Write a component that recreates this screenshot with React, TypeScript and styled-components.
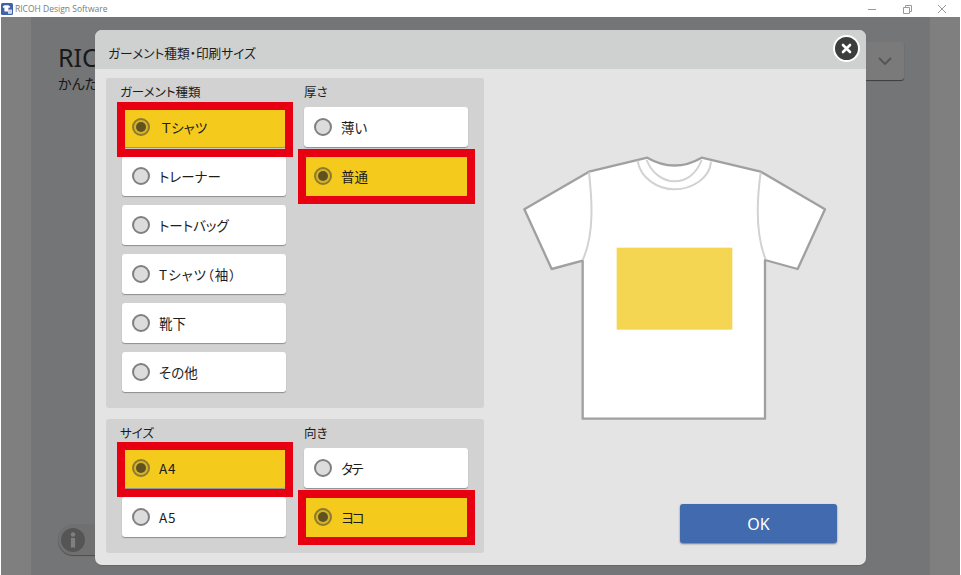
import React from "react";
import styled, { createGlobalStyle } from "styled-components";

const Global = createGlobalStyle`
  html, body { margin: 0; padding: 0; background: #fff; overflow: hidden; }
  * { box-sizing: border-box; }
  body { font-family: "Noto Sans CJK JP", "Noto Sans", sans-serif; font-feature-settings: "palt"; }
`;

const Root = styled.div`
  position: relative;
  width: 961px;
  height: 575px;
  display: flex;
  flex-direction: column;
  background: #fff;
  overflow: hidden;
`;

const TitleBar = styled.header`
  height: 17px;
  display: flex;
  align-items: center;
  padding-left: 1px;
  background: #fff;
`;

const AppName = styled.span`
  margin-left: 2px;
  font: 8.5px "Open Sans", "Noto Sans", sans-serif;
  color: #7a7a7a;
`;

const WindowControls = styled.div`
  margin-left: auto;
  display: flex;
  align-items: center;
  gap: 25px;
  padding-right: 14px;
  color: #9a9a9a;
`;

const Workspace = styled.div`
  position: relative;
  flex: 1;
  padding: 0 31px 0 31px;
  background: #fff;
  display: flex;
`;

const Page = styled.main`
  flex: 1;
  background: #e9ebec;
  display: flex;
  flex-direction: column;
  padding: 25px 26px 20px 27px;
`;

const PageTop = styled.div`
  display: flex;
  align-items: flex-start;
  justify-content: space-between;
`;

const Heading = styled.div`
  font: 25px/30px "Noto Sans", sans-serif;
  color: #333;
`;

const Sub = styled.div`
  font-size: 14px;
  line-height: 22px;
  color: #333;
  margin-top: 0;
`;

const Dropdown = styled.div`
  width: 80px;
  height: 38px;
  background: #f4f4f4;
  border-radius: 3px;
  box-shadow: 0 1px 1px #777;
  display: flex;
  align-items: center;
  justify-content: flex-end;
  padding-right: 11px;
  color: #a8a8a8;
`;

const InfoPill = styled.div`
  margin-top: auto;
  width: 60px;
  height: 31px;
  border-radius: 16px;
  background: #e0e0e0;
  box-shadow: 0 1px 1px #999;
  display: flex;
  align-items: center;
  padding-left: 3px;
`;

const Scrim = styled.div`
  position: absolute;
  inset: 0 1px;
  background: rgba(0, 0, 0, 0.5);
`;

const Dialog = styled.section`
  position: absolute;
  left: 95px;
  top: 30px;
  width: 771px;
  height: 535px;
  background: #e4e4e4;
  border-radius: 7px;
  box-shadow: 0 1px 1px #666;
  display: flex;
  flex-direction: column;
  z-index: 2;
`;

const DialogHeader = styled.div`
  height: 39px;
  display: flex;
  align-items: center;
  padding: 6px 0 0 13px;
  background: #cfd1d0;
  border-radius: 7px 7px 0 0;
  font-size: 12.7px;
  color: #1c1c1c;
`;

const CloseButton = styled.button`
  position: absolute;
  right: 6px;
  top: 5px;
  width: 27px;
  height: 27px;
  padding: 0;
  border-radius: 50%;
  border: 2px solid #fff;
  background: #3d3d3d;
  display: flex;
  align-items: center;
  justify-content: center;
`;

const DialogBody = styled.div`
  flex: 1;
  display: flex;
  padding: 9px 0 12px 11px;
`;

const LeftColumn = styled.div`
  width: 378px;
  display: flex;
  flex-direction: column;
  gap: 11px;
`;

const Panel = styled.div`
  display: grid;
  grid-template-columns: 164px 164px;
  column-gap: 18px;
  padding: 5px 0 16px 16px;
  background: #d2d2d2;
  border-radius: 3px;
`;

const Group = styled.div`
  display: flex;
  flex-direction: column;
  gap: 9px;
  align-self: start;
`;

const GroupLabel = styled.div<{ $offset: number }>`
  height: 15px;
  margin-left: ${(p) => p.$offset}px;
  font-size: 12.5px;
  line-height: 18px;
  color: #1c1c1c;
`;

const Option = styled.div<{ $selected?: boolean }>`
  position: relative;
  height: 40px;
  display: flex;
  align-items: center;
  padding-left: 10px;
  gap: 9px;
  border-radius: 3px;
  background: ${(p) => (p.$selected ? "#f4cb1d" : "#fff")};
  box-shadow: 0 1px 1px #8d8d8d;
  font-size: 13.5px;
  color: #1c1c1c;
`;

const RadioMark = styled.span<{ $selected?: boolean }>`
  flex: none;
  width: 18px;
  height: 18px;
  border-radius: 50%;
  border: 2px solid ${(p) => (p.$selected ? "#8b7a33" : "#808080")};
  background: ${(p) => (p.$selected ? "#d8b425" : "#dcdcdc")};
  display: flex;
  align-items: center;
  justify-content: center;
  &::after {
    content: "";
    display: ${(p) => (p.$selected ? "block" : "none")};
    width: 10px;
    height: 10px;
    border-radius: 50%;
    background: #5f5120;
  }
`;

const OptionText = styled.span<{ $indent?: number; $spacing?: number }>`
  margin-left: ${(p) => p.$indent ?? 0}px;
  letter-spacing: ${(p) => p.$spacing ?? 0}px;
  line-height: 20px;
`;

const Highlight = styled.span<{ $t: number; $b: number; $l: number; $r: number }>`
  position: absolute;
  top: ${(p) => p.$t}px;
  bottom: ${(p) => p.$b}px;
  left: ${(p) => p.$l}px;
  right: ${(p) => p.$r}px;
  border: 8px solid #e60012;
  z-index: 1;
`;

const RightColumn = styled.div`
  flex: 1;
  display: flex;
  flex-direction: column;
  align-items: flex-start;
  padding-left: 26px;
`;

const Shirt = styled.svg`
  display: block;
  margin-top: 62px;
`;

const OkButton = styled.button`
  margin-top: auto;
  margin-bottom: 10px;
  margin-left: 170px;
  width: 157px;
  height: 39px;
  border: 0;
  border-radius: 3px;
  background: #426aaf;
  box-shadow: 0 1px 2px #777;
  color: #fff;
  font: 16px "Noto Sans", sans-serif;
`;

type Mark = { t: number; b: number; l: number; r: number };
type Item = { label: string; selected?: boolean; mark?: Mark; indent?: number; spacing?: number };

const RadioOption = ({ label, selected, mark, indent, spacing }: Item) => (
  <Option $selected={selected}>
    <RadioMark $selected={selected} />
    <OptionText $indent={indent} $spacing={spacing}>{label}</OptionText>
    {mark && <Highlight $t={mark.t} $b={mark.b} $l={mark.l} $r={mark.r} />}
  </Option>
);

const OptionGroup = ({ title, items, offset }: { title: string; items: Item[]; offset: number }) => (
  <Group>
    <GroupLabel $offset={offset}>{title}</GroupLabel>
    {items.map((i) => (
      <RadioOption key={i.label} {...i} />
    ))}
  </Group>
);

const garments: Item[] = [
  { label: "Ｔシャツ", selected: true, indent: 2, mark: { t: -5, b: -10, l: -5, r: -7 } },
  { label: "トレーナー" },
  { label: "トートバッグ" },
  { label: "Tシャツ（袖）", spacing: 1 },
  { label: "靴下" },
  { label: "その他" },
];
const thickness: Item[] = [
  { label: "薄い" },
  { label: "普通", selected: true, mark: { t: -7, b: -8, l: -6, r: -7 } },
];
const sizes: Item[] = [
  { label: "A4", selected: true, spacing: 0.8, mark: { t: -6, b: -9, l: -5, r: -7 } },
  { label: "A5", spacing: 0.8 },
];
const orientation: Item[] = [
  { label: "タテ", spacing: -1.5 },
  { label: "ヨコ", selected: true, spacing: -2, mark: { t: -7, b: -8, l: -6, r: -7 } },
];

export default function App() {
  return (
    <Root>
      <Global />
      <TitleBar>
        <svg width="12" height="12" viewBox="0 0 12 12">
          <rect width="12" height="12" rx="1.5" fill="#3f62a8" />
          <path d="M3.6 2.2 L1.6 3.6 L2.4 5 L3.4 4.6 V8.6 H7.4 V4.6 L8.4 5 L9.2 3.6 L7.2 2.2 Z" fill="#fff" />
          <path d="M7 6.5 H11 V10.8 H7 Z" fill="#cfd8ea" />
        </svg>
        <AppName>RICOH Design Software</AppName>
        <WindowControls>
          <svg width="10" height="10" viewBox="0 0 10 10">
            <path d="M1 5.5 H9" stroke="currentColor" fill="none" />
          </svg>
          <svg width="10" height="10" viewBox="0 0 10 10">
            <path d="M1.5 3.5 H7.5 V9.5 H1.5 Z M3.5 3.5 V1.5 H9.5 V7.5 H7.5" stroke="currentColor" fill="none" />
          </svg>
          <svg width="10" height="10" viewBox="0 0 10 10">
            <path d="M1 1 L9 9 M9 1 L1 9" stroke="currentColor" fill="none" />
          </svg>
        </WindowControls>
      </TitleBar>
      <Workspace>
        <Page>
          <PageTop>
            <div>
              <Heading>RIC</Heading>
              <Sub>かんた</Sub>
            </div>
            <Dropdown>
              <svg width="16" height="10" viewBox="0 0 16 10">
                <path d="M2 2 L8 8 L14 2" stroke="currentColor" strokeWidth="1.8" fill="none" />
              </svg>
            </Dropdown>
          </PageTop>
          <InfoPill>
            <svg width="24" height="24" viewBox="0 0 24 24">
              <circle cx="12" cy="12" r="12" fill="#aaa" />
              <circle cx="12" cy="6.5" r="2.2" fill="#fff" />
              <rect x="9.9" y="10" width="4.2" height="9.5" fill="#fff" />
            </svg>
          </InfoPill>
        </Page>
        <Scrim />
      </Workspace>
      <Dialog>
        <DialogHeader>ガーメント種類・印刷サイズ</DialogHeader>
        <CloseButton aria-label="close">
          <svg width="11" height="11" viewBox="0 0 11 11">
            <path d="M2 2 L9 9 M9 2 L2 9" stroke="#fff" strokeWidth="2.6" strokeLinecap="round" />
          </svg>
        </CloseButton>
        <DialogBody>
          <LeftColumn>
            <Panel>
              <OptionGroup title="ガーメント種類" items={garments} offset={-2} />
              <OptionGroup title="厚さ" items={thickness} offset={0} />
            </Panel>
            <Panel>
              <OptionGroup title="サイズ" items={sizes} offset={-2} />
              <OptionGroup title="向き" items={orientation} offset={0} />
            </Panel>
          </LeftColumn>
          <RightColumn>
            <Shirt width="330" height="290" viewBox="0 0 990 870">
              <path
                d="M412 53 L237 95 L43 208 L125 387 L218 362 V836 H765 V360 L863 387 L945 208 L752 95 L575 53 Q493 100 412 53 Z"
                fill="#fff"
                stroke="#a0a0a0"
                strokeWidth="7"
                strokeLinejoin="round"
              />
              <g fill="none" stroke="#d2d2d2" strokeWidth="6">
                <path d="M237 97 C245 170 255 280 218 360" />
                <path d="M752 97 C742 170 735 280 767 358" />
                <path d="M383 62 C390 115 445 148 493 148 C545 148 600 115 603 65" />
                <path d="M410 60 C425 100 460 124 493 124 C530 124 560 100 575 60" />
              </g>
              <rect x="320" y="323" width="347" height="246" fill="#f5d653" />
            </Shirt>
            <OkButton>OK</OkButton>
          </RightColumn>
        </DialogBody>
      </Dialog>
    </Root>
  );
}
